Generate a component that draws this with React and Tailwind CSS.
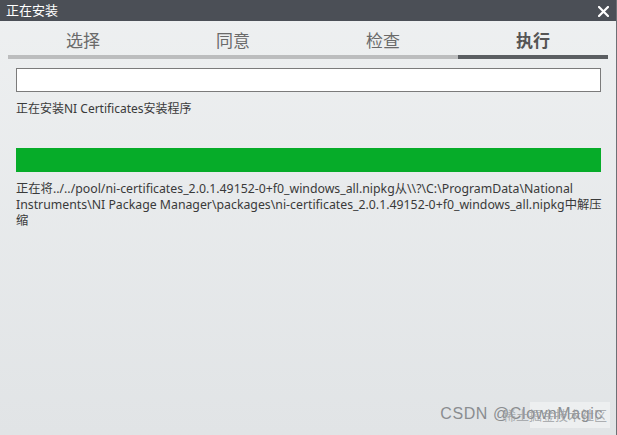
import React from 'react';

const font = { fontFamily: '"Noto Sans", "Noto Sans CJK SC", sans-serif' };

const tabs = [
  { label: '选择' },
  { label: '同意' },
  { label: '检查' },
  { label: '执行', active: true },
];

export default function App() {
  return (
    <div
      className="relative h-[435px] w-[617px] overflow-hidden bg-gradient-to-b from-[#eef0f1] to-[#e1e4e6] text-[#3a3a3a]"
      style={font}
    >
      <div className="flex h-[21px] items-center justify-between bg-[#4b4f56] pl-[6px] pr-[8px] text-white">
        <span className="text-[13px] leading-none">正在安装</span>
        <svg width="11" height="11" viewBox="0 0 11 11" className="mt-[1px]">
          <path d="M1 1 L10 10 M10 1 L1 10" stroke="white" strokeWidth="2.2" strokeLinecap="square" />
        </svg>
      </div>

      <div className="ml-[8px] mt-[8px] flex w-[600px]">
        {tabs.map((t) => (
          <div key={t.label} className="flex w-[150px] flex-col items-center">
            <span
              className={
                t.active
                  ? 'text-[17px] font-bold leading-[24px] text-[#555]'
                  : 'text-[17px] leading-[24px] text-[#6a6a6a]'
              }
            >
              {t.label}
            </span>
            <div className={t.active ? 'mt-[2px] h-[4px] w-full bg-[#5b5e62]' : 'mt-[2px] h-[4px] w-full bg-[#bcbdbe]'} />
          </div>
        ))}
      </div>

      <div className="mx-[16px] mt-[9px] h-[24px] border border-[#7b7b7b] bg-white" />

      <div className="ml-[16px] mt-[9px] text-[12px] leading-[16px] text-[#3a3a3a]">
        正在安装NI Certificates安装程序
      </div>

      <div className="mx-[16px] mt-[31px] h-[24px] bg-[#06ac29]" />

      <div className="ml-[16px] mr-[12px] mt-[9px] text-[12.3px] leading-[16px] text-[#3a3a3a]">
        正在将../../pool/ni-certificates_2.0.1.49152-0+f0_windows_all.nipkg从\\?\C:\ProgramData\National Instruments\NI Package Manager\packages\ni-certificates_2.0.1.49152-0+f0_windows_all.nipkg中解压缩
      </div>

      <div className="absolute right-0 top-0 h-full w-[1px] bg-[#6d7075]" />

      {/* watermark */}
      <div className="absolute bottom-[7px] right-[7px] h-[26px] w-[80px] bg-white/40" />
      <span
        className="absolute bottom-[13px] right-[14px] text-[16px] leading-none tracking-[0.6px] text-[#8a8d90]"
        style={{ fontFamily: '"Liberation Sans", sans-serif' }}
      >
        CSDN @ClownMagic
      </span>
      <span className="absolute bottom-[13px] right-[10px] text-[13px] leading-none text-[#9a9da0]/80">
        稀土掘金技术社区
      </span>
    </div>
  );
}
